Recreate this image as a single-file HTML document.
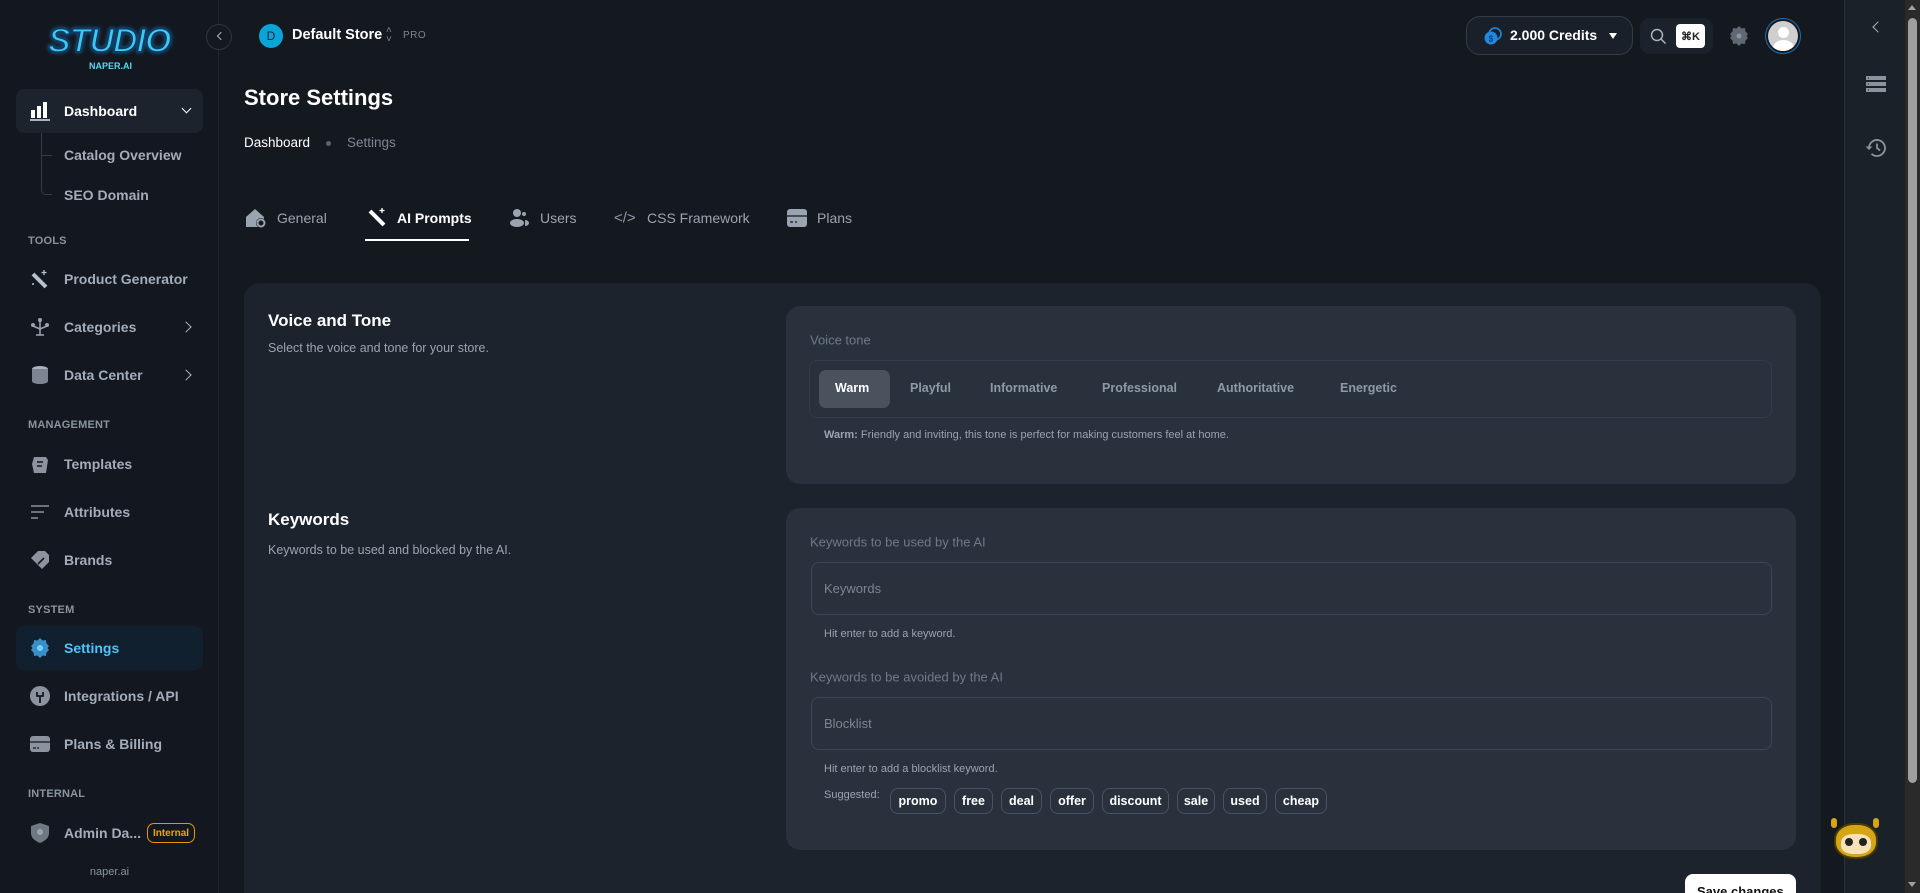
<!DOCTYPE html>
<html style="width:1920px;height:893px;overflow:hidden"><head><meta charset="utf-8"><style>
*{box-sizing:border-box;margin:0;padding:0}
body{width:1920px;height:893px;overflow:hidden;background:#141920;font-family:"Liberation Sans",sans-serif;position:relative;color:#fff}
.a{position:absolute;white-space:nowrap}
.side{position:absolute;left:0;top:0;width:219px;height:893px;background:#131820;border-right:1px solid #1f262f}
.nav{position:absolute;left:64px;font-size:14px;color:#a3acb8;font-weight:bold;transform:translateY(-50%)}
.sec{position:absolute;left:28px;font-size:11px;color:#8a939e;font-weight:bold;letter-spacing:.2px;transform:translateY(-50%)}
.ic{position:absolute;left:30px;width:20px;height:20px;transform:translateY(-50%)}
.chev{position:absolute;left:182px;width:8px;height:8px;border-right:1.6px solid #aab3bf;border-top:1.6px solid #aab3bf;transform:translateY(-50%) rotate(45deg)}
.tab{position:absolute;top:218px;font-size:14px;color:#9aa4b1;transform:translateY(-50%)}
.tone{position:absolute;top:388px;font-size:12.5px;font-weight:bold;color:#8e99a8;transform:translateY(-50%)}
.chip{position:absolute;top:788px;height:26px;border:1px solid #4a5360;border-radius:8px;font-size:12.5px;font-weight:bold;color:#fff;display:flex;align-items:center;justify-content:center}
.lbl{position:absolute;left:810px;font-size:13px;color:#6f7a88;transform:translateY(-50%)}
.hint{position:absolute;left:824px;font-size:11px;color:#9aa4b1;transform:translateY(-50%)}
.inp{position:absolute;left:811px;width:961px;height:53px;border:1px solid #3d4653;border-radius:8px;background:#28313c}
</style></head><body>
<div class="side">
  <div class="a" style="left:48px;top:22px;font:italic 900 34px 'Liberation Sans',sans-serif;color:#3ec9f0;letter-spacing:-1px;-webkit-text-stroke:2px #0d3b66;text-shadow:0 0 4px #1e88c8">STUDIO</div>
  <div class="a" style="left:89px;top:61px;font:bold 9px 'Liberation Sans',sans-serif;color:#5fd3f5">NAPER.AI</div>

  <div class="a" style="left:16px;top:89px;width:187px;height:44px;background:#1d232c;border-radius:8px"></div>
  <svg class="ic" style="top:111px" viewBox="0 0 20 20"><rect x="1" y="9" width="4" height="8" fill="#fff"/><rect x="7" y="5" width="4" height="12" fill="#fff"/><rect x="13" y="1" width="4" height="16" fill="#fff"/><rect x="0" y="18" width="20" height="2" fill="#aab3bf"/></svg>
  <div class="nav" style="top:111px;color:#fff">Dashboard</div>
  <div class="a" style="left:183px;top:105px;width:7px;height:7px;border-right:1.6px solid #fff;border-bottom:1.6px solid #fff;transform:rotate(45deg)"></div>
  <div class="a" style="left:41px;top:133px;width:11px;height:62px;border-left:1px solid #353d48;border-bottom:1px solid #353d48;border-bottom-left-radius:5px"></div>
  <div class="a" style="left:41px;top:155px;width:11px;border-bottom:1px solid #353d48"></div>
  <div class="nav" style="top:155px">Catalog Overview</div>
  <div class="nav" style="top:195px">SEO Domain</div>

  <div class="sec" style="top:241px">TOOLS</div>
  <svg class="ic" style="top:279px" viewBox="0 0 20 20"><path d="M3 5 L16 18" stroke="#b9c1cc" stroke-width="4"/><path d="M14 1v5M11.5 3.5h5" stroke="#b9c1cc" stroke-width="1.3"/><circle cx="3" cy="15" r="1" fill="#b9c1cc"/></svg>
  <div class="nav" style="top:279px">Product Generator</div>
  <svg class="ic" style="top:327px" viewBox="0 0 20 20"><path d="M10 3v15M6 18h8M3 9l7 3 7-3" stroke="#9aa4b1" stroke-width="1.5" fill="none"/><circle cx="10" cy="3" r="2" fill="#9aa4b1"/><circle cx="3" cy="8" r="2" fill="#9aa4b1"/><circle cx="17" cy="8" r="2" fill="#9aa4b1"/></svg>
  <div class="nav" style="top:327px">Categories</div><div class="chev" style="top:327px"></div>
  <svg class="ic" style="top:375px" viewBox="0 0 20 20"><ellipse cx="10" cy="4" rx="8" ry="3" fill="#aab3bf"/><path d="M2 4v12c0 2 4 3 8 3s8-1 8-3V4" fill="#7c8591"/></svg>
  <div class="nav" style="top:375px">Data Center</div><div class="chev" style="top:375px"></div>

  <div class="sec" style="top:425px">MANAGEMENT</div>
  <svg class="ic" style="top:464px" viewBox="0 0 20 20"><path d="M4 3h12l2 3-2 13H4L2 10z" fill="#8a939e"/><path d="M7 8h6M7 12h5" stroke="#131820" stroke-width="1.6"/></svg>
  <div class="nav" style="top:464px">Templates</div>
  <svg class="ic" style="top:512px" viewBox="0 0 20 20"><path d="M1 4h18M1 10h13M1 16h7" stroke="#8a939e" stroke-width="1.6"/></svg>
  <div class="nav" style="top:512px">Attributes</div>
  <svg class="ic" style="top:560px" viewBox="0 0 20 20"><path d="M1 8L8 1h7l4 4v7l-7 7z" fill="#8a939e"/><path d="M8 14l6-6" stroke="#131820" stroke-width="1.6"/></svg>
  <div class="nav" style="top:560px">Brands</div>

  <div class="sec" style="top:610px">SYSTEM</div>
  <div class="a" style="left:16px;top:626px;width:187px;height:44px;background:#11202f;border-radius:8px"></div>
  <svg class="ic" style="top:648px" viewBox="0 0 20 20"><path d="M10 0l2.5 2.5 3.5-.5.5 3.5L19 8l-1.5 2L19 12l-2.5 2.5-.5 3.5-3.5-.5L10 20l-2.5-2.5-3.5.5-.5-3.5L1 12l1.5-2L1 8l2.5-2.5.5-3.5 3.5.5z" fill="#3a8fc6"/><circle cx="10" cy="10" r="3" fill="#6fd6ff"/></svg>
  <div class="nav" style="top:648px;color:#4fc3f7">Settings</div>
  <svg class="ic" style="top:696px" viewBox="0 0 20 20"><circle cx="10" cy="10" r="10" fill="#8a939e"/><path d="M7 6v4h6V6M10 10v7" stroke="#131820" stroke-width="1.8" fill="none"/></svg>
  <div class="nav" style="top:696px">Integrations / API</div>
  <svg class="ic" style="top:744px" viewBox="0 0 20 20"><rect x="0" y="2" width="20" height="16" rx="3" fill="#8a939e"/><path d="M0 8h20" stroke="#131820" stroke-width="1.3"/><path d="M3 14h3M7 14h2" stroke="#131820" stroke-width="1.2"/></svg>
  <div class="nav" style="top:744px">Plans &amp; Billing</div>

  <div class="sec" style="top:794px">INTERNAL</div>
  <svg class="ic" style="top:833px" viewBox="0 0 20 20"><path d="M10 0l9 3v7c0 5-4 8-9 10C5 18 1 15 1 10V3z" fill="#6f7883"/><circle cx="10" cy="9" r="3" fill="#9aa4b1"/></svg>
  <div class="nav" style="top:833px">Admin Da...</div>
  <div class="a" style="left:147px;top:823px;width:48px;height:20px;border:1.3px solid #e69500;border-radius:7px;font-size:10px;font-weight:bold;color:#f4a300;display:flex;align-items:center;justify-content:center">Internal</div>
  <div class="a" style="left:0;width:219px;top:866px;text-align:center;font-size:11px;color:#8a939e">naper.ai</div>
</div>

<div class="a" style="left:206px;top:24px;width:26px;height:26px;border-radius:50%;border:1px solid #2d3540;background:#141920"></div>
<div class="a" style="left:218px;top:33px;width:6px;height:6px;border-left:1.4px solid #aab3bf;border-bottom:1.4px solid #aab3bf;transform:rotate(45deg)"></div>

<div class="a" style="left:259px;top:24px;width:24px;height:24px;border-radius:50%;background:#0aa5d8;color:#0d2736;font-size:12px;display:flex;align-items:center;justify-content:center">D</div>
<div class="a" style="left:292px;top:27px;font-size:14.5px;font-weight:bold">Default Store</div>
<div class="a" style="left:386px;top:26px;font-size:10px;color:#7c8591;line-height:9px">˄<br>˅</div>
<div class="a" style="left:403px;top:30px;font-size:10px;color:#7c8591;letter-spacing:.5px">PRO</div>

<div class="a" style="left:244px;top:85px;font-size:22px;font-weight:bold">Store Settings</div>
<div class="a" style="left:244px;top:135px;font-size:13.5px;color:#fff">Dashboard</div>
<div class="a" style="left:326px;top:141px;width:5px;height:5px;border-radius:50%;background:#5a6370"></div>
<div class="a" style="left:347px;top:135px;font-size:13.5px;color:#7c8591">Settings</div>

<svg class="a" style="left:245px;top:207px" width="22" height="22" viewBox="0 0 22 22"><path d="M1 10L10 2l9 8v10H1z" fill="#9aa4b1"/><circle cx="16" cy="16" r="5" fill="#141920"/><circle cx="16" cy="16" r="3.5" fill="none" stroke="#9aa4b1" stroke-width="2"/></svg>
<div class="tab" style="left:277px">General</div>
<svg class="a" style="left:367px;top:207px" width="20" height="20" viewBox="0 0 20 20"><path d="M3 4L17 18" stroke="#fff" stroke-width="4"/><path d="M15 1v5M12.5 3.5h5" stroke="#fff" stroke-width="1.3"/></svg>
<div class="tab" style="left:397px;color:#fff;font-weight:bold">AI Prompts</div>
<div class="a" style="left:365px;top:239px;width:104px;height:2px;background:#fff"></div>
<svg class="a" style="left:509px;top:208px" width="20" height="20" viewBox="0 0 20 20"><circle cx="8" cy="5" r="4" fill="#9aa4b1"/><ellipse cx="8" cy="15" rx="7" ry="4" fill="#9aa4b1"/><circle cx="15" cy="6" r="2" fill="#9aa4b1"/><path d="M16 12a4 3 0 010 6" fill="#9aa4b1"/></svg>
<div class="tab" style="left:540px">Users</div>
<div class="tab" style="left:614px;font-size:15px;color:#8e99a8">&lt;/&gt;</div>
<div class="tab" style="left:647px">CSS Framework</div>
<svg class="a" style="left:787px;top:209px" width="20" height="18" viewBox="0 0 20 18"><rect width="20" height="18" rx="3" fill="#9aa4b1"/><path d="M0 7h20" stroke="#141920" stroke-width="1.3"/><path d="M3 13h3M8 13h2" stroke="#141920" stroke-width="1.2"/></svg>
<div class="tab" style="left:817px">Plans</div>

<div class="a" style="left:244px;top:283px;width:1577px;height:610px;background:#1d232d;border-radius:16px 16px 0 0"></div>
<div class="a" style="left:268px;top:311px;font-size:17px;font-weight:bold">Voice and Tone</div>
<div class="a" style="left:268px;top:341px;font-size:12.5px;color:#9aa4b1">Select the voice and tone for your store.</div>
<div class="a" style="left:268px;top:510px;font-size:17px;font-weight:bold">Keywords</div>
<div class="a" style="left:268px;top:543px;font-size:12.5px;color:#9aa4b1">Keywords to be used and blocked by the AI.</div>

<div class="a" style="left:786px;top:306px;width:1010px;height:178px;background:#28313c;border-radius:14px"></div>
<div class="lbl" style="top:340px">Voice tone</div>
<div class="a" style="left:809px;top:360px;width:963px;height:58px;border:1px solid #333c48;border-radius:8px"></div>
<div class="a" style="left:819px;top:370px;width:71px;height:38px;background:#4a525d;border-radius:7px"></div>
<div class="tone" style="left:835px;color:#fff">Warm</div>
<div class="tone" style="left:910px">Playful</div>
<div class="tone" style="left:990px">Informative</div>
<div class="tone" style="left:1102px">Professional</div>
<div class="tone" style="left:1217px">Authoritative</div>
<div class="tone" style="left:1340px">Energetic</div>
<div class="hint" style="top:435px"><b>Warm:</b> Friendly and inviting, this tone is perfect for making customers feel at home.</div>

<div class="a" style="left:786px;top:508px;width:1010px;height:342px;background:#28313c;border-radius:14px"></div>
<div class="lbl" style="top:542px">Keywords to be used by the AI</div>
<div class="inp" style="top:562px"></div>
<div class="a" style="left:824px;top:581px;font-size:13px;color:#7c8591">Keywords</div>
<div class="hint" style="top:634px">Hit enter to add a keyword.</div>
<div class="lbl" style="top:677px">Keywords to be avoided by the AI</div>
<div class="inp" style="top:697px"></div>
<div class="a" style="left:824px;top:716px;font-size:13px;color:#7c8591">Blocklist</div>
<div class="hint" style="top:769px">Hit enter to add a blocklist keyword.</div>
<div class="hint" style="top:795px">Suggested:</div>
<div class="chip" style="left:890px;width:56px">promo</div>
<div class="chip" style="left:954px;width:39px">free</div>
<div class="chip" style="left:1001px;width:41px">deal</div>
<div class="chip" style="left:1050px;width:44px">offer</div>
<div class="chip" style="left:1102px;width:67px">discount</div>
<div class="chip" style="left:1177px;width:38px">sale</div>
<div class="chip" style="left:1223px;width:44px">used</div>
<div class="chip" style="left:1275px;width:52px">cheap</div>

<div class="a" style="left:1685px;top:874px;width:111px;height:19px;background:#fff;border-radius:8px 8px 0 0;color:#111;font-size:13px;font-weight:bold;padding:10px 0 0 12px;overflow:hidden">Save changes</div>

<div class="a" style="left:1466px;top:16px;width:167px;height:39px;border:1px solid #343c47;border-radius:14px;background:#1a2029"></div>
<svg class="a" style="left:1484px;top:27px" width="18" height="18" viewBox="0 0 18 18"><circle cx="11" cy="7" r="6" fill="none" stroke="#1e88e5" stroke-width="1.6"/><circle cx="7" cy="11" r="6.5" fill="#1e88e5"/><text x="7" y="14.5" font-size="8" text-anchor="middle" fill="#0d2736" font-family="Liberation Sans">$</text></svg>
<div class="a" style="left:1510px;top:27px;font-size:14px;font-weight:bold">2.000 Credits</div>
<div class="a" style="left:1609px;top:33px;border-left:4px solid transparent;border-right:4px solid transparent;border-top:6px solid #fff"></div>
<div class="a" style="left:1640px;top:18px;width:73px;height:36px;background:#1c222b;border-radius:10px"></div>
<svg class="a" style="left:1650px;top:28px" width="17" height="17" viewBox="0 0 17 17"><circle cx="7" cy="7" r="5.5" fill="none" stroke="#aab3bf" stroke-width="1.5"/><path d="M11 11l4.5 4.5" stroke="#aab3bf" stroke-width="1.5"/></svg>
<div class="a" style="left:1676px;top:24px;width:29px;height:24px;background:#fff;border-radius:4px;color:#222;font-size:11px;font-weight:bold;display:flex;align-items:center;justify-content:center">⌘K</div>
<svg class="a" style="left:1729px;top:26px" width="20" height="20" viewBox="0 0 20 20"><path d="M10 0l2.5 2.5 3.5-.5.5 3.5L19 8l-1.5 2L19 12l-2.5 2.5-.5 3.5-3.5-.5L10 20l-2.5-2.5-3.5.5-.5-3.5L1 12l1.5-2L1 8l2.5-2.5.5-3.5 3.5.5z" fill="#5f6873"/><circle cx="10" cy="10" r="2.5" fill="#8a939e"/></svg>
<div class="a" style="left:1765px;top:18px;width:36px;height:36px;border-radius:50%;border:1px solid #1e6fb0;padding:2px"><div style="width:100%;height:100%;border-radius:50%;background:#cfcfcf;overflow:hidden;position:relative"><div style="position:absolute;left:10px;top:6px;width:11px;height:11px;border-radius:50%;background:#fff"></div><div style="position:absolute;left:5px;top:19px;width:21px;height:16px;border-radius:50%;background:#fff"></div></div></div>

<div class="a" style="left:1844px;top:0;width:61px;height:893px;background:#1b2129;border-left:1px solid #2a313b"></div>
<div class="a" style="left:1874px;top:23px;width:8px;height:8px;border-left:1.6px solid #aab3bf;border-bottom:1.6px solid #aab3bf;transform:rotate(45deg)"></div>
<svg class="a" style="left:1866px;top:75px" width="20" height="18" viewBox="0 0 20 18"><rect y="1" width="20" height="4" fill="#8a939e"/><rect y="7" width="20" height="4" fill="#8a939e"/><rect y="13" width="20" height="4" fill="#8a939e"/><path d="M2 3h1M2 9h1M2 15h1" stroke="#1b2129"/></svg>
<svg class="a" style="left:1865px;top:137px" width="22" height="22" viewBox="0 0 22 22"><path d="M4 11a8 8 0 1 1 2.5 5.8" fill="none" stroke="#8a939e" stroke-width="1.8"/><path d="M0.5 9.5l3.5 3.5 3.5-3.5z" fill="#8a939e"/><path d="M12 6.5V11l3 2.5" fill="none" stroke="#8a939e" stroke-width="1.8"/></svg>
<div class="a" style="left:1905px;top:0;width:15px;height:893px;background:#2a2a2a"></div>
<div class="a" style="left:1908px;top:18px;width:9px;height:765px;background:#9e9e9e;border-radius:5px"></div>
<div class="a" style="left:1908px;top:5px;border-left:4.5px solid transparent;border-right:4.5px solid transparent;border-bottom:5px solid #a0a0a0"></div>
<div class="a" style="left:1908px;top:882px;border-left:4.5px solid transparent;border-right:4.5px solid transparent;border-top:5px solid #a0a0a0"></div>

<div class="a" style="left:1831px;top:818px;width:6px;height:10px;border-radius:3px;background:#d4a514"></div>
<div class="a" style="left:1873px;top:818px;width:6px;height:10px;border-radius:3px;background:#d4a514"></div>
<div class="a" style="left:1834px;top:823px;width:44px;height:36px;border-radius:45%;background:#d4a514;border:2px solid #4a3a05"></div>
<div class="a" style="left:1841px;top:834px;width:30px;height:20px;border-radius:40%;background:#f6e1b8"></div>
<div class="a" style="left:1845px;top:838px;width:8px;height:8px;border-radius:50%;background:#222"></div>
<div class="a" style="left:1859px;top:838px;width:8px;height:8px;border-radius:50%;background:#222"></div>
</body></html>
